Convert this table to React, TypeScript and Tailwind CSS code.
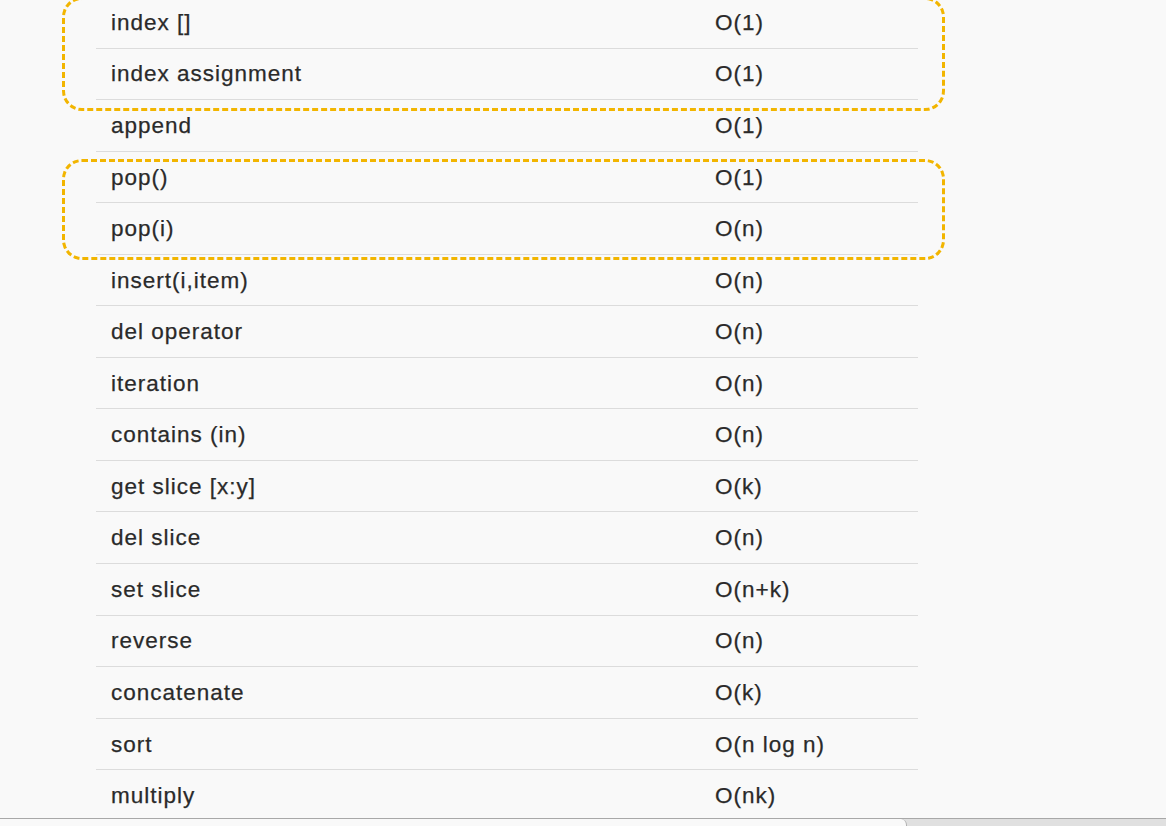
const rows: [string, string][] = [
  ["index []", "O(1)"],
  ["index assignment", "O(1)"],
  ["append", "O(1)"],
  ["pop()", "O(1)"],
  ["pop(i)", "O(n)"],
  ["insert(i,item)", "O(n)"],
  ["del operator", "O(n)"],
  ["iteration", "O(n)"],
  ["contains (in)", "O(n)"],
  ["get slice [x:y]", "O(k)"],
  ["del slice", "O(n)"],
  ["set slice", "O(n+k)"],
  ["reverse", "O(n)"],
  ["concatenate", "O(k)"],
  ["sort", "O(n log n)"],
  ["multiply", "O(nk)"],
];

function Highlight({ className }: { className: string }) {
  return (
    <div
      className={
        "pointer-events-none absolute left-[62px] w-[883px] rounded-[20px] border-[3px] border-dashed border-[#f2b500] " +
        className
      }
    />
  );
}

export default function App() {
  return (
    <div
      className="relative h-[826px] w-[1166px] overflow-hidden bg-[#f9f9f9] text-[#2a2a2a]"
      style={{ fontFamily: '"Liberation Sans", Arial, sans-serif' }}
    >
      <div className="mt-[-3px] pl-[96px]">
        <div className="w-[822px]">
          {rows.map(([op, cost]) => (
            <div
              key={op}
              className="flex h-[51.55px] items-center border-b border-[#dcdcdc] pt-px text-[22.5px] tracking-[1px] [-webkit-text-stroke:0.25px_#2a2a2a]"
            >
              <div className="w-[619px] pl-[15px]">{op}</div>
              <div>{cost}</div>
            </div>
          ))}
        </div>
      </div>

      <Highlight className="top-[-3px] h-[114px]" />
      <Highlight className="top-[159px] h-[101px]" />

      <div className="absolute bottom-0 left-0 flex h-[8px] w-full border-t border-[#a8a8a8] bg-[#e0e0e0]">
        <div className="h-full w-[907px] rounded-tr-[6px] border-r border-[#b0b0b0] bg-[#f9f9f9]" />
      </div>
    </div>
  );
}
